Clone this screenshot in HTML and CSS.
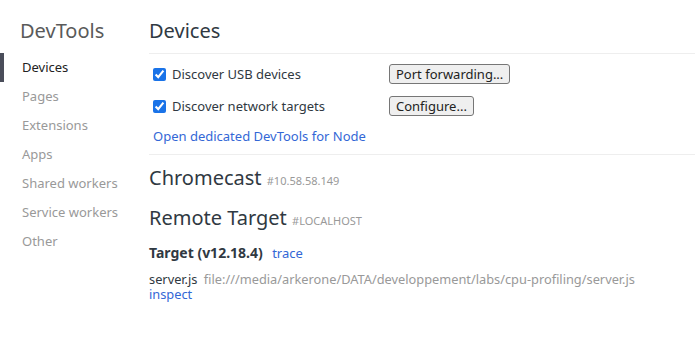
FILE: index.html
```html
<!DOCTYPE html>
<html>
<head>
<meta charset="utf-8">
<link rel="stylesheet" href="styles.css">
</head>
<body>
<div class="page">
  <nav class="sidebar">
    <div class="brand">DevTools</div>
    <ul class="nav">
      <li class="nav-item active">Devices</li>
      <li class="nav-item">Pages</li>
      <li class="nav-item">Extensions</li>
      <li class="nav-item">Apps</li>
      <li class="nav-item">Shared workers</li>
      <li class="nav-item">Service workers</li>
      <li class="nav-item">Other</li>
    </ul>
  </nav>
  <main class="main">
    <h1 class="title">Devices</h1>
    <section class="options">
      <div class="opt-row">
        <label class="opt-label"><input type="checkbox" class="cb" checked> Discover USB devices</label>
        <button class="btn">Port forwarding...</button>
      </div>
      <div class="opt-row">
        <label class="opt-label"><input type="checkbox" class="cb" checked> Discover network targets</label>
        <button class="btn">Configure...</button>
      </div>
      <a class="link node-link">Open dedicated DevTools for Node</a>
    </section>
    <section class="devices">
      <h2 class="device">Chromecast <span class="serial">#10.58.58.149</span></h2>
      <h2 class="device">Remote Target <span class="serial">#LOCALHOST</span></h2>
      <div class="browser">
        <span class="browser-name">Target (v12.18.4)</span>
        <a class="link">trace</a>
      </div>
      <div class="target">
        <div class="target-line"><span class="target-name">server.js</span> <span class="target-url">file:///media/arkerone/DATA/developpement/labs/cpu-profiling/server.js</span></div>
        <a class="link inspect">inspect</a>
      </div>
    </section>
  </main>
</div>
</body>
</html>
```
FILE: styles.css
```css
* { box-sizing: border-box; }
html, body { margin: 0; padding: 0; background: #fff; }
body {
  font-family: "Noto Sans", "Open Sans", sans-serif;
  font-size: 13px;
  color: #303942;
  width: 695px;
  height: 356px;
  overflow: hidden;
}
.page { display: flex; }
.sidebar { width: 149px; flex: none; padding-top: 19px; }
.brand {
  font-size: 20px;
  color: #5a5a5a;
  padding-left: 20px;
  line-height: 24px;
  margin-bottom: 10px;
}
.nav { list-style: none; margin: 0; padding: 0; }
.nav-item {
  height: 29px;
  line-height: 29px;
  padding-left: 22px;
  color: #999;
  font-size: 13px;
}
.nav-item.active {
  color: #222;
  box-shadow: inset 4px 0 0 #4a4d5a;
}
.main { flex: 1; }
.title {
  margin: 0;
  font-weight: normal;
  font-size: 20px;
  line-height: 24px;
  padding-top: 19px;
  padding-bottom: 10px;
  border-bottom: 1px solid #eee;
  color: #303942;
}
.options {
  padding: 4px 0 9px 4px;
  border-bottom: 1px solid #eee;
  display: flex;
  flex-direction: column;
}
.opt-row { display: flex; align-items: center; height: 32px; }
.opt-label { width: 236px; display: flex; align-items: center; }
.cb { margin: 0 6px 0 0; width: 13px; height: 13px; accent-color: #1a73e8; }
.btn {
  font-family: inherit;
  font-size: 13px;
  color: #222;
  background: #efefef;
  border: 1px solid #767676;
  border-radius: 3px;
  padding: 0 6px;
  height: 20px;
  line-height: 18px;
}
.link { color: #3367d6; text-decoration: none; cursor: pointer; }
.node-link { margin-top: 5px; line-height: 18px; }
.devices { padding-top: 9px; }
.device {
  margin: 0 0 9px;
  font-weight: normal;
  font-size: 20px;
  line-height: 28px;
  color: #303942;
}
.serial { font-size: 11px; color: #999; }
.browser { margin-top: 2px; font-size: 13px; line-height: 18px; }
.browser-name { font-weight: bold; font-size: 14px; margin-right: 6px; }
.target { margin-top: 10px; font-size: 12.8px; line-height: 15px; display: flex; flex-direction: column; align-items: flex-start; }
.target-line { height: 15px; }
.inspect { height: 15px; }
.target-url { color: #999; margin-left: 3px; }
```
